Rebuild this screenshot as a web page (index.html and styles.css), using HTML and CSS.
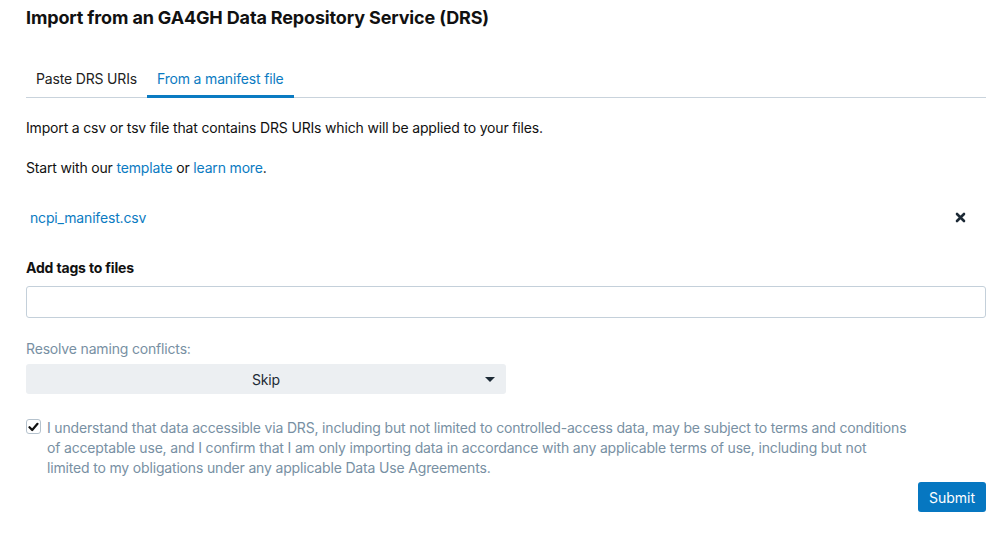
FILE: index.html
```html
<!DOCTYPE html>
<html>
<head>
<meta charset="utf-8">
<link rel="stylesheet" href="styles.css">
</head>
<body>
<div class="page">
  <h1 class="title">Import from an GA4GH Data Repository Service (DRS)</h1>
  <div class="tabs">
    <div class="tab">Paste DRS URIs</div>
    <div class="tab active">From a manifest file</div>
  </div>
  <p class="para first">Import a csv or tsv file that contains DRS URIs which will be applied to your files.</p>
  <p class="para">Start with our <a class="link" href="#">template</a> or <a class="link" href="#">learn more</a>.</p>
  <div class="file-row">
    <a class="link file-name" href="#">ncpi_manifest.csv</a>
    <span class="remove">
      <svg width="11" height="11" viewBox="0 0 11 11"><path d="M2 2 L9 9 M9 2 L2 9" stroke="#1d2a36" stroke-width="2.6" stroke-linecap="round"/></svg>
    </span>
  </div>
  <div class="label-bold">Add tags to files</div>
  <input class="tags-input" type="text">
  <div class="label-muted">Resolve naming conflicts:</div>
  <div class="select">
    <span class="select-value">Skip</span>
    <span class="caret"></span>
  </div>
  <label class="agree">
    <span class="checkbox">
      <svg width="11" height="10" viewBox="0 0 11 10"><path d="M1.5 5.2 L4.2 8 L9.5 1.8" fill="none" stroke="#111" stroke-width="2.2" stroke-linecap="round" stroke-linejoin="round"/></svg>
    </span>
    <span class="agree-text">I understand that data accessible via DRS, including but not limited to controlled-access data, may be subject to terms and conditions of acceptable use, and I confirm that I am only importing data in accordance with any applicable terms of use, including but not limited to my obligations under any applicable Data Use Agreements.</span>
  </label>
  <div class="actions">
    <button class="submit">Submit</button>
  </div>
</div>
</body>
</html>
```

FILE: styles.css
```css
* { box-sizing: border-box; }
html, body { margin: 0; padding: 0; background: #fff; }
body {
  font-family: Inter, "Noto Sans", "Liberation Sans", sans-serif;
  font-size: 14px;
  letter-spacing: -0.17px;
  color: #111;
}
.page {
  padding: 8px 19px 0 26px;
  display: flex;
  flex-direction: column;
}
.title {
  margin: 0;
  font-size: 18px;
  font-weight: 700;
  line-height: 20px;
  letter-spacing: -0.15px;
  color: #111;
}
.tabs {
  display: flex;
  margin-top: 39px;
  border-bottom: 1px solid #c9d3dc;
}
.tab {
  padding: 0 10px;
  height: 31px;
  line-height: 24px;
  color: #222;
  border-bottom: 3px solid transparent;
  margin-bottom: -1px;
}
.tab.active {
  color: #0b7bc2;
  border-bottom-color: #0b7bc2;
}
.para {
  margin: 0;
  line-height: 20px;
  margin-top: 20px;
}
.para.first { margin-top: 20px; }
.link { color: #0b7bc2; text-decoration: none; }
.file-row {
  display: flex;
  justify-content: space-between;
  align-items: center;
  margin-top: 29px;
  padding: 0 20px 0 4px;
  height: 20px;
}
.remove { display: flex; }
.label-bold {
  margin-top: 31px;
  font-weight: 700;
  line-height: 20px;
}
.tags-input {
  margin-top: 8px;
  height: 32px;
  width: 100%;
  border: 1px solid #c4d0da;
  border-radius: 3px;
  font: inherit;
}
.label-muted {
  margin-top: 21px;
  color: #7890a3;
  line-height: 20px;
}
.select {
  margin-top: 5px;
  width: 480px;
  height: 30px;
  background: #eceff2;
  border-radius: 3px;
  display: flex;
  align-items: center;
  justify-content: center;
  position: relative;
  color: #1d2a36;
}
.caret {
  position: absolute;
  right: 11px;
  top: 13px;
  width: 0;
  height: 0;
  border-left: 5px solid transparent;
  border-right: 5px solid transparent;
  border-top: 5px solid #1d2a36;
}
.agree {
  display: flex;
  align-items: flex-start;
  margin-top: 24px;
  gap: 6px;
}
.checkbox {
  flex: none;
  width: 15px;
  height: 15px;
  margin-top: 1px;
  border: 1px solid #b5c2cd;
  border-radius: 3px;
  display: flex;
  align-items: center;
  justify-content: center;
}
.agree-text {
  color: #7890a3;
  line-height: 20px;
  max-width: 862px;
}
.actions {
  display: flex;
  justify-content: flex-end;
  margin-top: 4px;
}
.submit {
  background: #0677c1;
  color: #fff;
  border: 0;
  border-radius: 3px;
  height: 30px;
  padding: 0 11px;
  font: inherit;
}
```
